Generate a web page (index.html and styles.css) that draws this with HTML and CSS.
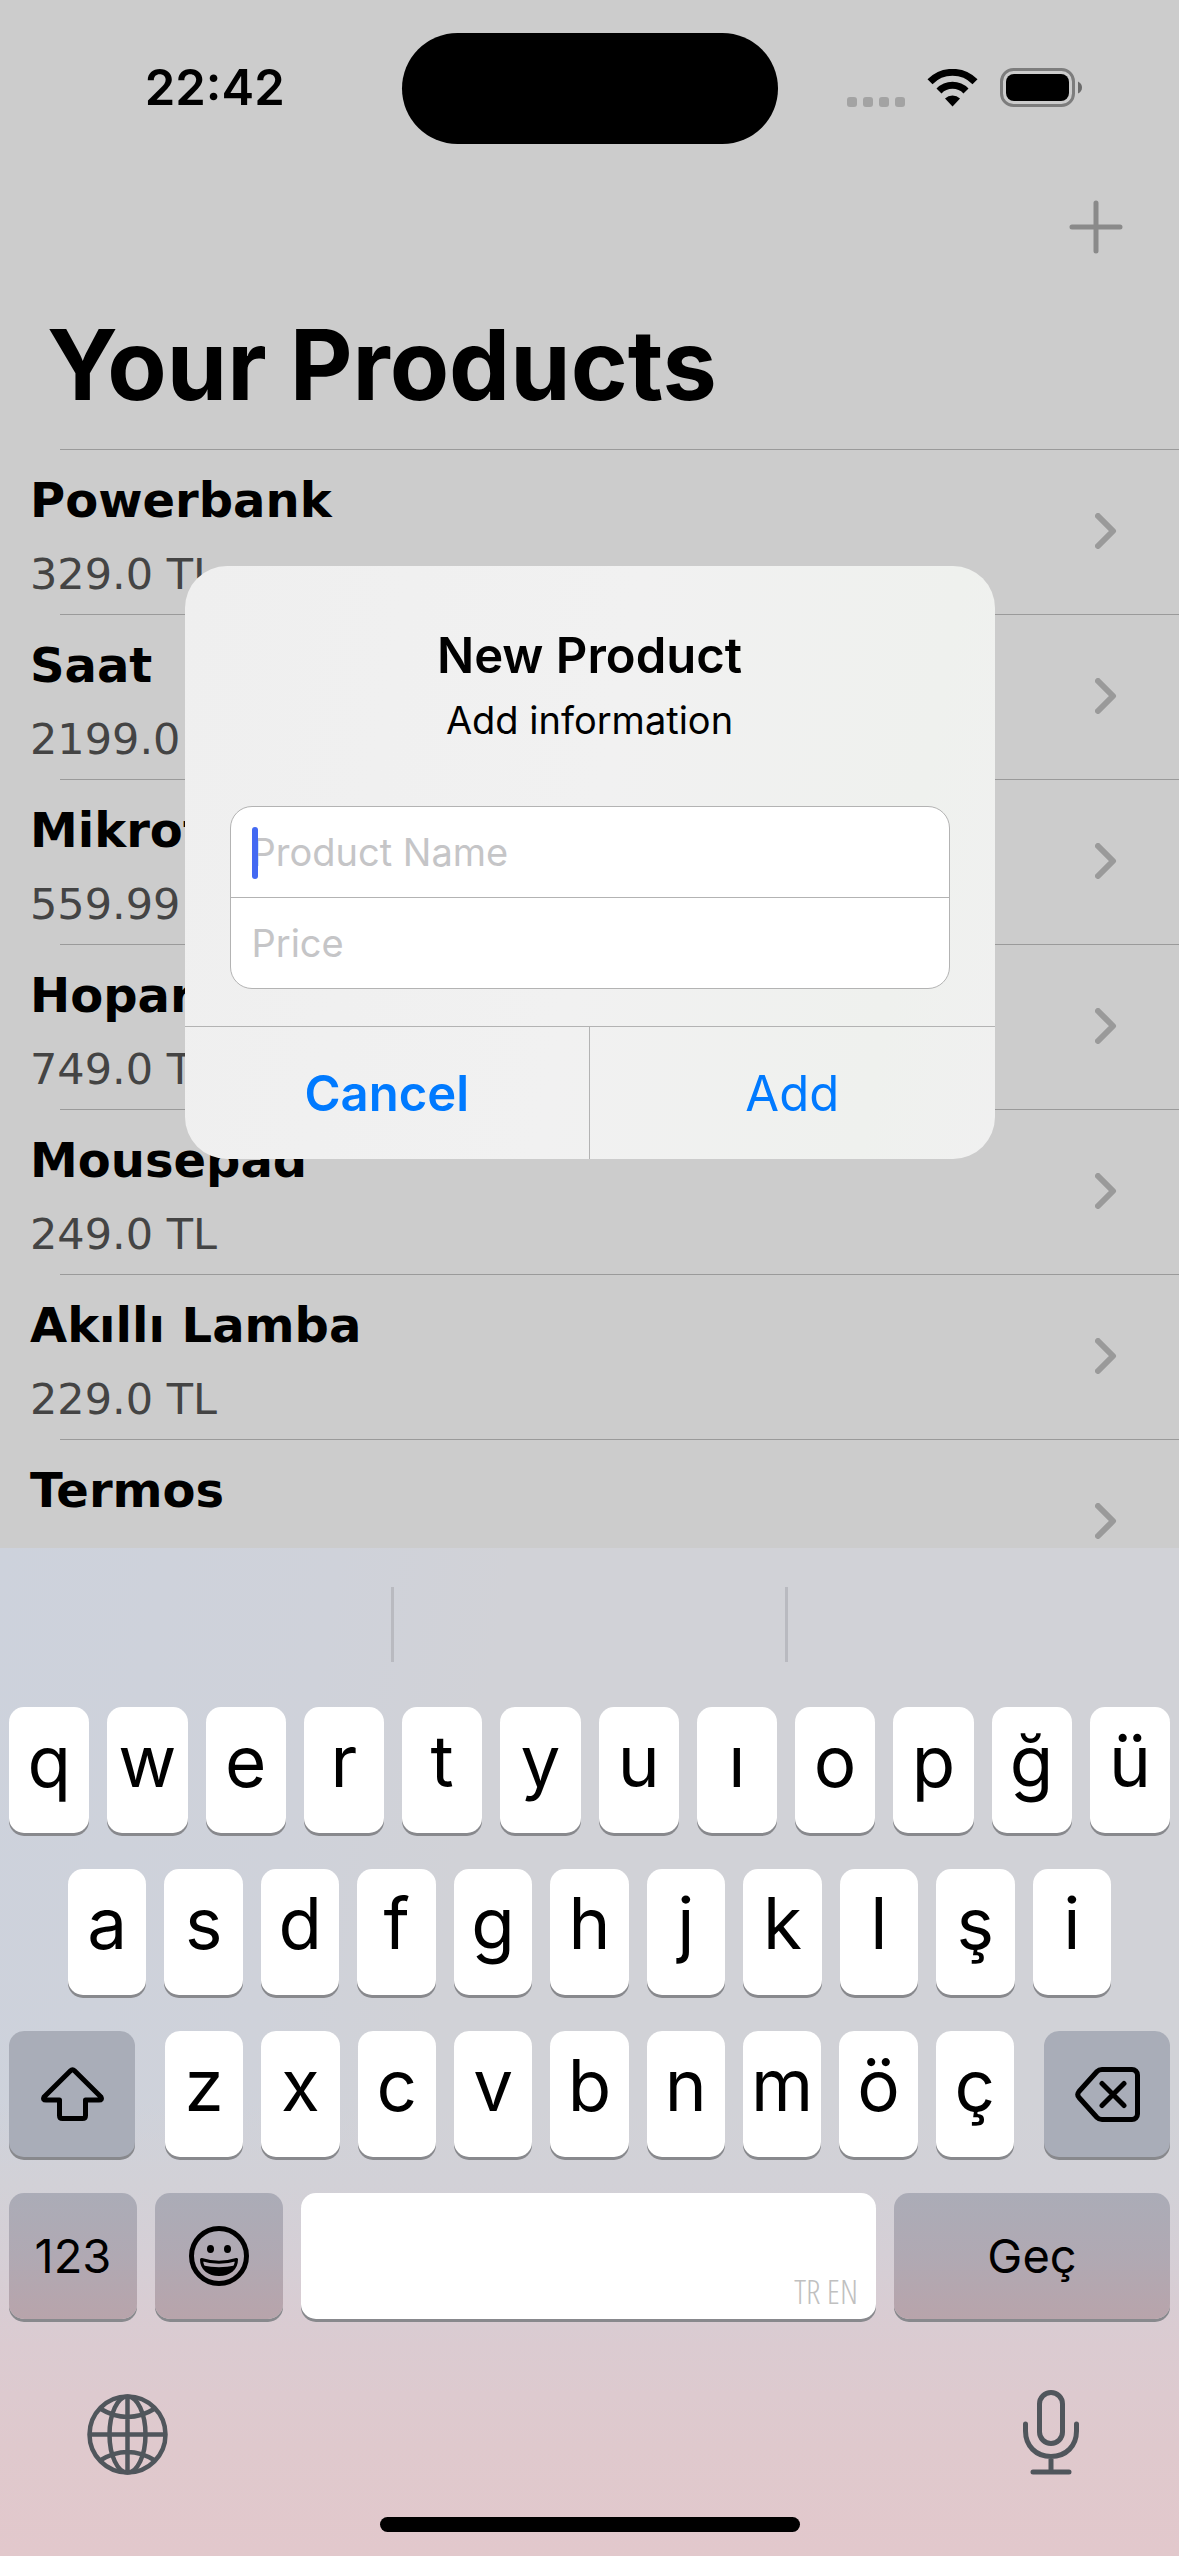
FILE: index.html
```html
<!DOCTYPE html>
<html lang="tr">
<head>
<meta charset="utf-8">
<meta name="viewport" content="width=device-width">
<title>Your Products</title>
<link rel="stylesheet" href="styles.css">
</head>
<body>
<div class="screen">
  <main class="app">
    <header class="status">
      <div class="status-side status-left"><time>22:42</time></div>
      <div class="island"></div>
      <div class="status-side status-right">
        <svg width="58" height="10" viewBox="0 0 58 10" fill="#a3a3a3"><rect width="10" height="10" rx="3"/><rect x="16" width="10" height="10" rx="3"/><rect x="32" width="10" height="10" rx="3"/><rect x="48" width="10" height="10" rx="3"/></svg>
        <svg width="51" height="38" viewBox="0 0 51 38"><g fill="none" stroke="#000" stroke-width="7"><path d="M3 12.800A31.500 31.500 0 0 1 48 12.800"/><path d="M12 22A18.800 18.800 0 0 1 39 22"/></g><path d="M25.500 37.500 18 29.500A11 11 0 0 1 33 29.500Z"/></svg>
        <svg width="82" height="39" viewBox="0 0 82 39"><rect x="1.500" y="1.500" width="72" height="36" rx="12" fill="none" stroke="#7d7d7d" stroke-width="3"/><rect x="6" y="6" width="63" height="27" rx="8"/><path d="M78 13.500q4 2 4 6t-4 6z" fill="#6b6b6b"/></svg>
      </div>
    </header>
    <nav class="navbar">
      <button class="add-button" type="button" aria-label="Add product"><svg width="54" height="54" viewBox="0 0 54 54" fill="none" stroke="#8a8a8a" stroke-width="5" stroke-linecap="round"><path d="M27 3v48M3 27h48"/></svg></button>
    </nav>
    <h1 class="title">Your Products</h1>
    <ul class="products">
      <li class="product"><div><h2 class="name">Powerbank</h2><p class="price">329.0 TL</p></div><svg class="chevron" viewBox="0 0 22 36"><path d="M3 3l15 15L3 33"/></svg></li>
      <li class="product"><div><h2 class="name">Saat</h2><p class="price">2199.0 TL</p></div><svg class="chevron" viewBox="0 0 22 36"><path d="M3 3l15 15L3 33"/></svg></li>
      <li class="product"><div><h2 class="name">Mikrofon</h2><p class="price">559.99 TL</p></div><svg class="chevron" viewBox="0 0 22 36"><path d="M3 3l15 15L3 33"/></svg></li>
      <li class="product"><div><h2 class="name">Hoparlör</h2><p class="price">749.0 TL</p></div><svg class="chevron" viewBox="0 0 22 36"><path d="M3 3l15 15L3 33"/></svg></li>
      <li class="product"><div><h2 class="name">Mousepad</h2><p class="price">249.0 TL</p></div><svg class="chevron" viewBox="0 0 22 36"><path d="M3 3l15 15L3 33"/></svg></li>
      <li class="product"><div><h2 class="name">Akıllı Lamba</h2><p class="price">229.0 TL</p></div><svg class="chevron" viewBox="0 0 22 36"><path d="M3 3l15 15L3 33"/></svg></li>
      <li class="product"><div><h2 class="name">Termos</h2></div><svg class="chevron" viewBox="0 0 22 36"><path d="M3 3l15 15L3 33"/></svg></li>
    </ul>
    <div class="overlay">
      <form class="dialog" role="dialog" aria-labelledby="dialog-title">
        <h2 class="dialog-title" id="dialog-title">New Product</h2>
        <p class="dialog-message">Add information</p>
        <div class="fields">
          <div class="field"><input type="text" aria-label="Product Name" placeholder="Product Name"><span class="caret"></span></div>
          <div class="field"><input type="text" aria-label="Price" placeholder="Price"></div>
        </div>
        <div class="actions">
          <button class="action action-cancel" type="button">Cancel</button>
          <button class="action" type="button">Add</button>
        </div>
      </form>
    </div>
  </main>

  <section class="keyboard" aria-label="Keyboard">
    <div class="suggestions"><span></span><span></span><span></span></div>
    <div class="rows">
      <div class="row">
        <button class="key" type="button">q</button><button class="key" type="button">w</button><button class="key" type="button">e</button><button class="key" type="button">r</button><button class="key" type="button">t</button><button class="key" type="button">y</button><button class="key" type="button">u</button><button class="key" type="button">ı</button><button class="key" type="button">o</button><button class="key" type="button">p</button><button class="key" type="button">ğ</button><button class="key" type="button">ü</button>
      </div>
      <div class="row row-home">
        <button class="key" type="button">a</button><button class="key" type="button">s</button><button class="key" type="button">d</button><button class="key" type="button">f</button><button class="key" type="button">g</button><button class="key" type="button">h</button><button class="key" type="button">j</button><button class="key" type="button">k</button><button class="key" type="button">l</button><button class="key" type="button">ş</button><button class="key" type="button">i</button>
      </div>
      <div class="row row-shift">
        <button class="key key-dark" type="button" aria-label="Shift"><svg width="63" height="55" viewBox="0 0 63 55" fill="none" stroke="#000" stroke-width="5" stroke-linejoin="round"><path d="M29.500 3.800q2-2 4 0L60 30q1.500 3-2 3H44.500v15.500q0 3-3 3h-20q-3 0-3-3V33H5q-3.500 0-2-3z"/></svg></button>
        <div class="row letters">
          <button class="key" type="button">z</button><button class="key" type="button">x</button><button class="key" type="button">c</button><button class="key" type="button">v</button><button class="key" type="button">b</button><button class="key" type="button">n</button><button class="key" type="button">m</button><button class="key" type="button">ö</button><button class="key" type="button">ç</button>
        </div>
        <button class="key key-dark" type="button" aria-label="Delete"><svg width="65" height="55" viewBox="0 0 65 55" fill="none" stroke="#000" stroke-width="5" stroke-linecap="round" stroke-linejoin="round"><path d="M27 2.500h30a5.500 5.500 0 0 1 5.500 5.500v39a5.500 5.500 0 0 1-5.500 5.500H27q-3 0-5-2L4 30.500q-2.500-3 0-6L22 4.500q2-2 5-2zM27 16.500l22 22M49 16.500l-22 22"/></svg></button>
      </div>
      <div class="row row-bottom">
        <button class="key key-dark key-tint key-label" type="button">123</button>
        <button class="key key-dark key-tint" type="button" aria-label="Emoji"><svg width="60" height="60" viewBox="0 0 60 60"><circle cx="30" cy="30" r="27.500" fill="none" stroke="#000" stroke-width="5"/><ellipse cx="21.500" cy="23" rx="3.500" ry="4"/><ellipse cx="38.500" cy="23" rx="3.500" ry="4"/><path d="M12.500 33.500Q30 39 47.500 33.500C47.500 43 40 48.500 30 48.500S12.500 43 12.500 33.500Z" fill="none" stroke="#000" stroke-width="3" stroke-linejoin="round"/><path d="M14 39.500Q30 43 46 39.500C43 46 37 49 30 49S17 46 14 39.500Z"/></svg></button>
        <button class="key key-space" type="button" aria-label="Space, TR EN">TR EN</button>
        <button class="key key-dark key-tint key-label" type="button">Geç</button>
      </div>
    </div>
    <footer class="tools">
      <button class="tool" type="button" aria-label="Next keyboard"><svg width="81" height="81" viewBox="0 0 81 81" fill="none" stroke="#50565c" stroke-width="4.500"><circle cx="40.500" cy="40.500" r="38"/><ellipse cx="40.500" cy="40.500" rx="18" ry="38"/><path d="M40.500 2.500v76M2.500 40.500h76M13 14.500q27.500 17 55 0M13 66.500q27.500-17 55 0"/></svg></button>
      <button class="tool" type="button" aria-label="Dictate"><svg width="56" height="85" viewBox="0 0 56 85" fill="none" stroke="#50565c" stroke-width="5" stroke-linecap="round"><rect x="16.500" y="2.500" width="23" height="51" rx="11.500"/><path d="M2.500 34v7C2.500 56 13 66.500 28 66.500S53.500 56 53.500 41v-7M28 66.500V82M10 82h36"/></svg></button>
    </footer>
    <div class="home-indicator"></div>
  </section>
</div>
</body>
</html>
```

FILE: styles.css
```css
* { box-sizing: border-box; }

body {
  margin: 0;
  background: #cccccc;
  color: #000;
  font-family: Inter, "Liberation Sans", sans-serif;
}

h1, h2, p, ul { margin: 0; padding: 0; }

button {
  margin: 0;
  padding: 0;
  border: 0;
  background: none;
  color: inherit;
  font-family: inherit;
}

svg { display: block; flex: none; }

.screen {
  display: flex;
  flex-direction: column;
  height: 100vh;
}

.app {
  position: relative;
  flex: 1;
  min-height: 0;
  overflow: hidden;
}

/* Status bar */
.status {
  display: flex;
  align-items: center;
  height: 177px;
}

.status-side {
  display: flex;
  flex: 1;
  justify-content: center;
  padding-bottom: 2px;
}

.status-left {
  padding-left: 28px;
  font-size: 49px;
  font-weight: 600;
  line-height: 60px;
}

.status-right {
  align-items: flex-end;
  gap: 22px;
  padding-right: 28px;
}

.island {
  width: 376px;
  height: 111px;
  border-radius: 56px;
  background: #000;
}

/* Navigation */
.navbar {
  display: flex;
  align-items: center;
  justify-content: flex-end;
  height: 100px;
  padding-right: 56px;
}

.title {
  padding: 28px 47px 24px;
  font-size: 97px;
  font-weight: 700;
  line-height: 120px;
}

/* Product list */
.products { list-style: none; }

.product {
  display: flex;
  align-items: flex-start;
  justify-content: space-between;
  height: 165px;
  padding: 22px 62px 0 30px;
  background: linear-gradient(#9a9a9a, #9a9a9a) no-repeat 60px 0 / 100% 1px;
  font-family: Verdana, "DejaVu Sans", sans-serif;
}

.name {
  font-size: 48px;
  font-weight: 700;
  line-height: 58px;
}

.price {
  padding-top: 18px;
  color: #444;
  font-size: 43px;
  line-height: 54px;
}

.chevron {
  width: 22px;
  height: 36px;
  margin-top: 42px;
  fill: none;
  stroke: #9a9a9a;
  stroke-width: 6px;
  stroke-linecap: round;
  stroke-linejoin: round;
}

/* Alert */
.overlay {
  position: absolute;
  inset: 0;
  display: flex;
  align-items: center;
  justify-content: center;
  padding-top: 177px;
}

.dialog {
  width: 810px;
  max-width: 90%;
  overflow: hidden;
  border-radius: 42px;
  background: linear-gradient(100deg, #efefef, #f1f1f1 50%, #eff1ee 85%, #f0f0f0);
  text-align: center;
}

.dialog-title {
  padding-top: 60px;
  font-size: 49px;
  font-weight: 600;
  line-height: 60px;
}

.dialog-message {
  padding-top: 10px;
  font-size: 38px;
  line-height: 48px;
}

.fields {
  margin: 62px 45px 37px;
  overflow: hidden;
  border: 1px solid #b3b3b3;
  border-radius: 22px;
  background: #fff;
}

.field { position: relative; }
.field + .field { border-top: 1px solid #b3b3b3; }

.field input {
  display: block;
  width: 100%;
  height: 90px;
  padding: 0 21px;
  border: 0;
  outline: 0;
  background: none;
  color: #000;
  font-family: inherit;
  font-size: 38px;
}

.field input::placeholder { color: #c5c5c7; opacity: 1; }

.caret {
  position: absolute;
  top: 20px;
  left: 21px;
  width: 6px;
  height: 52px;
  border-radius: 3px;
  background: #4369f2;
}

.actions {
  display: flex;
  border-top: 1px solid #b3b3b3;
}

.action {
  flex: 1;
  height: 132px;
  color: #007aff;
  font-size: 49px;
}

.action-cancel {
  border-right: 1px solid #b3b3b3;
  font-weight: 600;
}

/* Keyboard */
.keyboard {
  flex: none;
  padding: 39px 0 24px;
  background:
    linear-gradient(to bottom, #d2d1d700 55%, #d2d1d7 63%, #d5cfd6 70%, #dbcbd1 79%, #dfc9cd 89%, #e2c8cc),
    linear-gradient(100deg, #cdd2dc, #cfd2da 25%, #d1d2d7 38%);
}

.suggestions {
  display: flex;
  height: 75px;
  margin-bottom: 45px;
}

.suggestions span { flex: 1; border-right: 3px solid #b9bac0; }
.suggestions span:last-child { border-right: 0; }

.rows {
  display: flex;
  flex-direction: column;
  gap: 36px;
  padding: 0 9px;
}

.row { display: flex; gap: 18px; }
.row-home { padding: 0 59px; }
.row-shift { display: grid; grid-template-columns: 126px 1fr 126px; gap: 30px; }
.row-bottom { display: grid; grid-template-columns: 128px 128px 1fr 276px; }

.key {
  display: flex;
  flex: 1;
  align-items: center;
  justify-content: center;
  min-width: 0;
  height: 126px;
  padding-bottom: 18px;
  border-radius: 15px;
  background: #fff;
  box-shadow: 0 3px 0 #88898d;
  font-size: 71px;
  font-weight: 400;
}

.key-dark {
  padding-bottom: 0;
  background: #a9adb8;
}

.key-tint { background: linear-gradient(#abacb7, #b0a9b3 50%, #b8a4ab); }

.key-label {
  padding-bottom: 2px;
  font-size: 47px;
}

.key-space {
  align-items: flex-end;
  justify-content: flex-end;
  padding: 0 18px 5px 0;
  color: #c0c0c0;
  font-family: "Open Sans Condensed Light", "Roboto Condensed", "Open Sans Condensed", "Open Sans", sans-serif;
  font-size: 34px;
  font-weight: 300;
}

.tools {
  display: flex;
  align-items: flex-end;
  justify-content: space-between;
  padding: 71px 100px 42px 87px;
}

.home-indicator {
  width: 420px;
  height: 15px;
  margin: 0 auto;
  border-radius: 8px;
  background: #000;
}
```
